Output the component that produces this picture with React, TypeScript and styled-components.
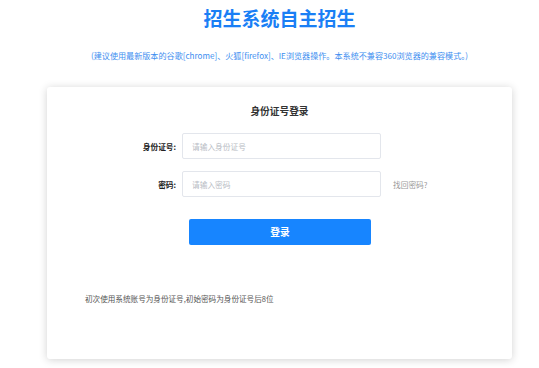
import React from "react"
import styled, { createGlobalStyle } from "styled-components"

const GlobalStyle = createGlobalStyle`
	html, body {
		margin: 0;
		padding: 0;
		background: #fff;
	}
	body {
		font-family: "Noto Sans CJK SC", "Liberation Sans", Arial, sans-serif;
	}
	* {
		box-sizing: border-box;
	}
`

const Page = styled.div`
	display: flex;
	flex-direction: column;
	align-items: center;
	padding: 0 0 0 20px;
	height: 368px;
	overflow: hidden;
`

const Title = styled.h1`
	margin: 6px 0 0;
	font-size: 19px;
	line-height: 24px;
	font-weight: 700;
	color: #1a7ff5;
`

const Notice = styled.p`
	margin: 20px 0 0;
	font-size: 8.1px;
	line-height: 12px;
	color: #3d8ef0;
	white-space: nowrap;
`

const Card = styled.div`
	margin-top: 25px;
	width: 465px;
	height: 272px;
	flex-shrink: 0;
	background: #fff;
	border-radius: 3px;
	box-shadow: 0 1px 8px rgba(0, 0, 0, 0.18);
	padding: 16px 0 0;
	display: flex;
	flex-direction: column;
`

const CardTitle = styled.h2`
	margin: 0;
	text-align: center;
	font-size: 9.7px;
	line-height: 16px;
	font-weight: 700;
	color: #333;
`

const Form = styled.div`
	margin-top: 14px;
	display: flex;
	flex-direction: column;
	gap: 12px;
`

const Row = styled.div`
	display: grid;
	grid-template-columns: 129px 199px auto;
	column-gap: 6px;
	align-items: center;
`

const Label = styled.label`
	text-align: right;
	font-size: 7.7px;
	font-weight: 700;
	color: #222;
`

const Input = styled.input`
	height: 26px;
	width: 199px;
	border: 1px solid #e3e6ec;
	border-radius: 2px;
	padding: 0 9px;
	font-family: inherit;
	font-size: 7.7px;
	outline: none;
	&::placeholder {
		color: #b8bcc4;
	}
`

const Link = styled.a`
	margin-left: 6px;
	font-size: 7.7px;
	color: #999;
	cursor: pointer;
`

const Submit = styled.button`
	align-self: center;
	margin: 22px 0 0 1px;
	width: 182px;
	height: 26px;
	border: none;
	border-radius: 2px;
	background: #1785ff;
	color: #fff;
	font-family: inherit;
	font-size: 9.7px;
	font-weight: 700;
	cursor: pointer;
`

const Tip = styled.p`
	margin: 48px 0 0 38px;
	font-size: 7.6px;
	line-height: 12px;
	color: #555;
`

export default function App() {
	return (
		<>
			<GlobalStyle />
			<Page>
				<Title>招生系统自主招生</Title>
				<Notice>(建议使用最新版本的谷歌[chrome]、火狐[firefox]、IE浏览器操作。本系统不兼容360浏览器的兼容模式。)</Notice>
				<Card>
					<CardTitle>身份证号登录</CardTitle>
					<Form>
						<Row>
							<Label>身份证号:</Label>
							<Input placeholder="请输入身份证号" />
						</Row>
						<Row>
							<Label>密码:</Label>
							<Input type="password" placeholder="请输入密码" />
							<Link>找回密码?</Link>
						</Row>
					</Form>
					<Submit>登录</Submit>
					<Tip>初次使用系统账号为身份证号,初始密码为身份证号后8位</Tip>
				</Card>
			</Page>
		</>
	)
}
